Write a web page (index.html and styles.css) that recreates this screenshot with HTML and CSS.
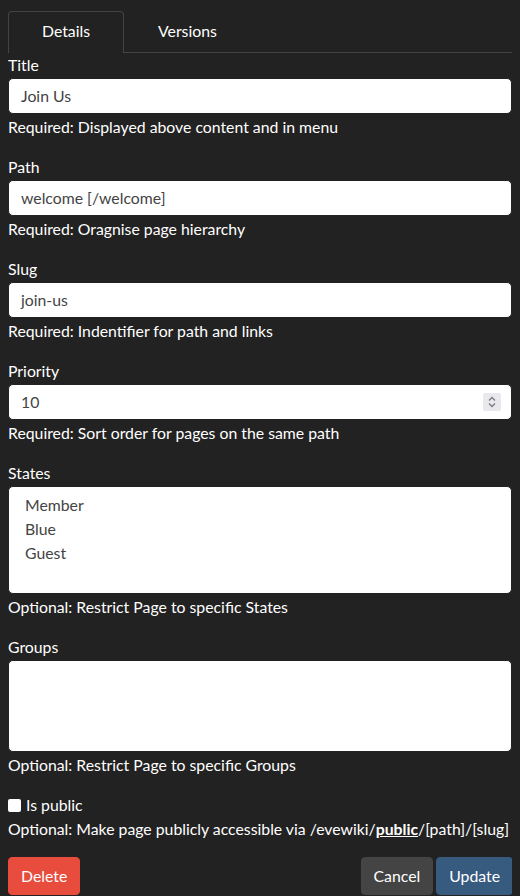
FILE: index.html
```html
<!DOCTYPE html>
<html lang="en">
<head>
<meta charset="utf-8">
<title>Edit page</title>
<link rel="stylesheet" href="styles.css">
</head>
<body>
<div class="page">
  <ul class="tabs">
    <li class="tab active">Details</li>
    <li class="tab">Versions</li>
  </ul>

  <div class="group">
    <label class="label">Title</label>
    <div class="control">Join Us</div>
    <div class="help">Required: Displayed above content and in menu</div>
  </div>

  <div class="group">
    <label class="label">Path</label>
    <div class="control">welcome [/welcome]</div>
    <div class="help">Required: Oragnise page hierarchy</div>
  </div>

  <div class="group">
    <label class="label">Slug</label>
    <div class="control">join-us</div>
    <div class="help">Required: Indentifier for path and links</div>
  </div>

  <div class="group">
    <label class="label">Priority</label>
    <div class="control number">
      <span>10</span>
      <span class="spin">
        <svg width="18" height="18" viewBox="0 0 18 18" aria-hidden="true">
          <path d="M6 7.5 L9 4.5 L12 7.5" fill="none" stroke="#7a7a80" stroke-width="1.4"/>
          <path d="M6 10.5 L9 13.5 L12 10.5" fill="none" stroke="#7a7a80" stroke-width="1.4"/>
        </svg>
      </span>
    </div>
    <div class="help">Required: Sort order for pages on the same path</div>
  </div>

  <div class="group">
    <label class="label">States</label>
    <div class="control listbox states">
      <div class="option">Member</div>
      <div class="option">Blue</div>
      <div class="option">Guest</div>
    </div>
    <div class="help">Optional: Restrict Page to specific States</div>
  </div>

  <div class="group">
    <label class="label">Groups</label>
    <div class="control listbox groups"></div>
    <div class="help">Optional: Restrict Page to specific Groups</div>
  </div>

  <div class="check-group">
    <label class="check"><span class="box"></span>Is public</label>
    <div class="help">Optional: Make page publicly accessible via /evewiki/<a class="link" href="#">public</a>/[path]/[slug]</div>
  </div>

  <div class="actions">
    <button class="btn danger">Delete</button>
    <div class="right">
      <button class="btn secondary">Cancel</button>
      <button class="btn primary">Update</button>
    </div>
  </div>
</div>
</body>
</html>
```

FILE: styles.css
```css
html, body {
  background: #222222;
}
body {
  margin: 8px;
  font-family: Lato, "Noto Sans", "Liberation Sans", sans-serif;
  font-size: 15.8px;
  line-height: 22px;
  color: #ffffff;
}
.page {
  padding-top: 3px;
}
.tabs {
  list-style: none;
  margin: 0;
  padding: 0;
  display: flex;
  border-bottom: 1px solid #444444;
  width: 505px;
}
.tab {
  padding: 8px 33px 10px;
  border: 1px solid transparent;
  border-bottom: none;
  border-radius: 4px 4px 0 0;
  margin-bottom: -1px;
  color: #ffffff;
}
.tab.active {
  border-color: #444444;
  background: #222222;
  padding-bottom: 11px;
}
.group {
  display: flex;
  flex-direction: column;
  margin-bottom: 18px;
}
.tabs + .group {
  margin-top: 1px;
}
.label {
  display: block;
  margin-bottom: 2px;
}
.control {
  box-sizing: border-box;
  height: 36px;
  background: #ffffff;
  border: 1px solid #222222;
  border-radius: 5px;
  color: #444444;
  padding: 6px 12px;
  line-height: 22px;
}
.number {
  display: flex;
  align-items: center;
  justify-content: space-between;
  padding-right: 10px;
}
.spin {
  display: flex;
  width: 18px;
  height: 18px;
  background: #e9e9ed;
  border-radius: 2px;
}
.listbox {
  padding: 6px 12px 6px 12px;
}
.states {
  height: 108px;
}
.groups {
  height: 92px;
}
.option {
  padding-left: 4px;
  line-height: 24px;
  height: 24px;
}
.help {
  margin-top: 2px;
  color: #ffffff;
}
.check-group {
  display: flex;
  flex-direction: column;
}
.check {
  display: flex;
  align-items: center;
  gap: 5px;
}
.box {
  display: inline-block;
  box-sizing: border-box;
  width: 13px;
  height: 13px;
  background: #ffffff;
  border-radius: 2px;
  margin-top: 1px;
}
.link {
  color: #ffffff;
  font-weight: 700;
  text-decoration: underline;
}
.actions {
  display: flex;
  justify-content: space-between;
  margin-top: 17px;
  width: 505px;
}
.right {
  display: flex;
  gap: 3px;
}
.btn {
  font-family: Lato, "Noto Sans", "Liberation Sans", sans-serif;
  font-size: 15.8px;
  line-height: 22px;
  height: 38px;
  padding: 7px 12px;
  border: 1px solid transparent;
  border-radius: 4px;
  color: #ffffff;
  cursor: pointer;
}
.danger {
  background: #e74c3c;
  border-color: #e74c3c;
}
.secondary {
  background: #444444;
  border-color: #444444;
}
.primary {
  background: #375a7f;
  border-color: #375a7f;
}
```
